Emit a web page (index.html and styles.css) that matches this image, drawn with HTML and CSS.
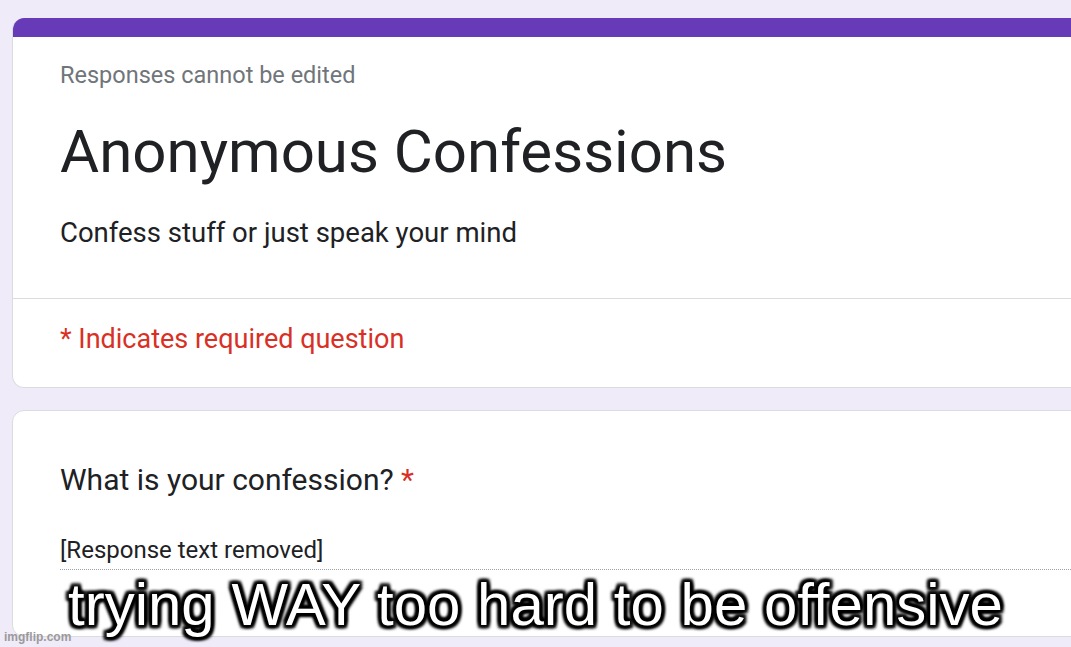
FILE: index.html
```html
<!DOCTYPE html>
<html lang="en">
<head>
<meta charset="utf-8">
<title>Anonymous Confessions</title>
<link rel="stylesheet" href="styles.css">
</head>
<body>
<main class="page">
  <section class="card header-card">
    <div class="accent"></div>
    <div class="header-body">
      <p class="note">Responses cannot be edited</p>
      <h1 class="title">Anonymous Confessions</h1>
      <p class="desc">Confess stuff or just speak your mind</p>
    </div>
    <div class="required-row">
      <p class="required">* Indicates required question</p>
    </div>
  </section>
  <section class="card question-card">
    <p class="question">What is your confession? <span class="star">*</span></p>
    <p class="answer">[Response text removed]</p>
  </section>
</main>
<div class="caption">trying WAY too hard to be offensive</div>
<div class="watermark">imgflip.com</div>
</body>
</html>
```
FILE: styles.css
```css
html, body {
  margin: 0;
  padding: 0;
  width: 1071px;
  height: 647px;
  overflow: hidden;
  background: #f0ebf8;
  font-family: Roboto, "Liberation Sans", Arial, sans-serif;
}
.page {
  padding: 18px 0 0 12px;
  display: flex;
  flex-direction: column;
  gap: 22px;
}
.card {
  width: 1100px;
  background: #fff;
  border: 1px solid #dadce0;
  border-radius: 12px;
  box-sizing: border-box;
}
.header-card {
  border-top: none;
  overflow: hidden;
}
.accent {
  height: 19px;
  background: #673ab7;
}
.header-body {
  padding: 24px 0 49px 47px;
}
.note {
  margin: 0;
  font-size: 23.5px;
  line-height: 28px;
  color: #70757a;
}
.title {
  margin: 31px 0 0;
  font-size: 60px;
  line-height: 64px;
  font-weight: 400;
  color: #202124;
}
.desc {
  margin: 33px 0 0;
  font-size: 27.5px;
  line-height: 32px;
  color: #202124;
}
.required-row {
  border-top: 1px solid #dadce0;
  padding: 25px 0 33px 47px;
}
.required {
  margin: 0;
  font-size: 27px;
  line-height: 30px;
  color: #d93025;
}
.question-card {
  height: 227px;
  padding: 53px 0 0 47px;
}
.question {
  margin: 0;
  font-size: 30px;
  line-height: 32px;
  color: #202124;
}
.star {
  color: #d93025;
}
.answer {
  margin: 40px 0 0;
  padding-bottom: 5px;
  font-size: 24px;
  line-height: 28px;
  color: #202124;
  border-bottom: 1px dotted #9aa0a6;
}
.caption {
  position: absolute;
  left: 0;
  right: 0;
  top: 575px;
  text-align: center;
  font-family: "Liberation Sans", Arial, sans-serif;
  font-size: 60px;
  line-height: 59px;
  color: #fff;
  text-shadow:
    3px 3px 3px #000, -3px -3px 3px #000, 3px -3px 3px #000, -3px 3px 3px #000,
    0 3px 3px #000, 0 -3px 3px #000, 3px 0 3px #000, -3px 0 3px #000,
    0 0 5px #000;
}
.watermark {
  position: absolute;
  left: 4px;
  top: 630px;
  font-family: "Liberation Sans", Arial, sans-serif;
  font-size: 12px;
  font-weight: 700;
  color: #9a9a9a;
}
```
